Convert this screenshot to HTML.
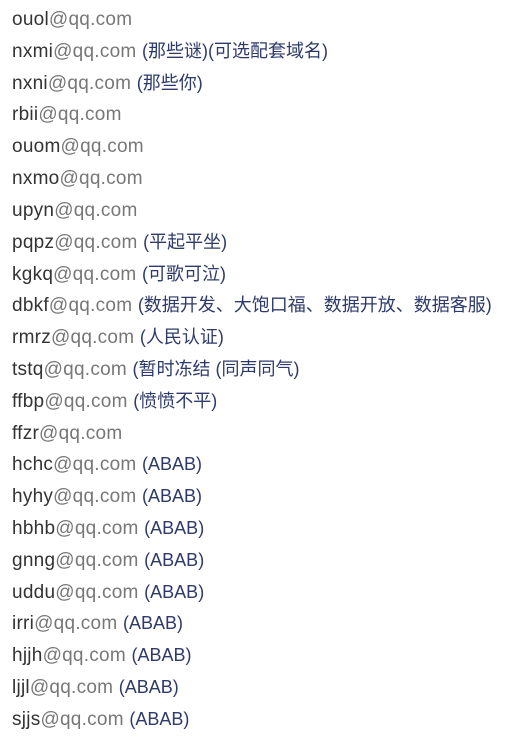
<!DOCTYPE html>
<html><head><meta charset="utf-8"><style>
html,body{margin:0;padding:0;background:#fff;width:516px;height:736px;overflow:hidden}
body{font-family:"Liberation Sans","Noto Sans CJK SC",sans-serif;font-size:19px;letter-spacing:0.25px;padding-top:4px}
div{height:31.82px;line-height:31.82px;padding-left:12px;white-space:nowrap;color:#333}
i{font-style:normal;color:#777}
b{font-weight:normal;color:#2e3a6a;font-size:18px;letter-spacing:0}
</style></head><body>
<div>ouol<i>@qq.com</i></div>
<div>nxmi<i>@qq.com</i> <b>(那些谜)(可选配套域名)</b></div>
<div>nxni<i>@qq.com</i> <b>(那些你)</b></div>
<div>rbii<i>@qq.com</i></div>
<div>ouom<i>@qq.com</i></div>
<div>nxmo<i>@qq.com</i></div>
<div>upyn<i>@qq.com</i></div>
<div>pqpz<i>@qq.com</i> <b>(平起平坐)</b></div>
<div>kgkq<i>@qq.com</i> <b>(可歌可泣)</b></div>
<div>dbkf<i>@qq.com</i> <b>(数据开发、大饱口福、数据开放、数据客服)</b></div>
<div>rmrz<i>@qq.com</i> <b>(人民认证)</b></div>
<div>tstq<i>@qq.com</i> <b>(暂时冻结 (同声同气)</b></div>
<div>ffbp<i>@qq.com</i> <b>(愤愤不平)</b></div>
<div>ffzr<i>@qq.com</i></div>
<div>hchc<i>@qq.com</i> <b>(ABAB)</b></div>
<div>hyhy<i>@qq.com</i> <b>(ABAB)</b></div>
<div>hbhb<i>@qq.com</i> <b>(ABAB)</b></div>
<div>gnng<i>@qq.com</i> <b>(ABAB)</b></div>
<div>uddu<i>@qq.com</i> <b>(ABAB)</b></div>
<div>irri<i>@qq.com</i> <b>(ABAB)</b></div>
<div>hjjh<i>@qq.com</i> <b>(ABAB)</b></div>
<div>ljjl<i>@qq.com</i> <b>(ABAB)</b></div>
<div>sjjs<i>@qq.com</i> <b>(ABAB)</b></div>
</body></html>
